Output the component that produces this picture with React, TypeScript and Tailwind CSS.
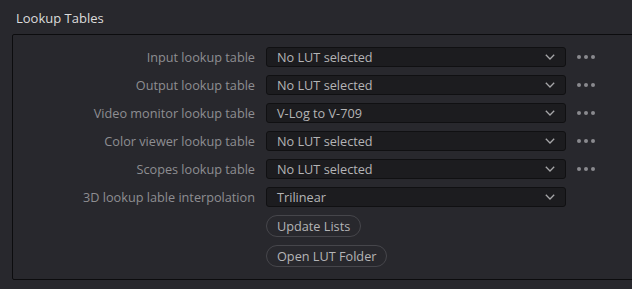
import React from "react";

const rows: { label: string; value: string; dots: boolean }[] = [
  { label: "Input lookup table", value: "No LUT selected", dots: true },
  { label: "Output lookup table", value: "No LUT selected", dots: true },
  { label: "Video monitor lookup table", value: "V-Log to V-709", dots: true },
  { label: "Color viewer lookup table", value: "No LUT selected", dots: true },
  { label: "Scopes lookup table", value: "No LUT selected", dots: true },
  { label: "3D lookup lable interpolation", value: "Trilinear", dots: false },
];

function Chevron() {
  return (
    <svg width="10" height="6" viewBox="0 0 10 6" fill="none">
      <path d="M0.8 0.8 L5 5 L9.2 0.8" stroke="#a6a6a8" strokeWidth="1.3" />
    </svg>
  );
}

function Dots() {
  return (
    <div className="flex items-center gap-[3px] w-[18px]">
      <span className="w-[4px] h-[4px] rounded-full bg-[#8a8a8e]" />
      <span className="w-[4px] h-[4px] rounded-full bg-[#8a8a8e]" />
      <span className="w-[4px] h-[4px] rounded-full bg-[#8a8a8e]" />
    </div>
  );
}

export default function App() {
  return (
    <div
      className="w-[632px] h-[289px] overflow-hidden bg-[#28282d] text-[12.7px]"
      style={{ fontFamily: '"Open Sans", "Noto Sans", sans-serif' }}
    >
      <div className="h-[34px] pl-[16px] pt-[6px] text-[13px] text-[#dcdcdc] leading-[24px]">Lookup Tables</div>
      <div className="ml-[12px] w-[640px] h-[246px] border border-[#0c0c0e] rounded-tl-[2px] rounded-bl-[2px] pt-[12px]">
        <div className="flex flex-col gap-[8px]">
          {rows.map((r) => (
            <div key={r.label} className="flex items-center h-[20px]">
              <div className="w-[242px] text-right text-[#8e8e92] leading-[20px] whitespace-nowrap">{r.label}</div>
              <div className="ml-[11px] w-[300px] h-[20px] bg-[#1c1c1f] border border-[#101012] rounded-[3px] flex items-center justify-between pl-[10px] pr-[10px]">
                <span className="text-[#b4b4b6] leading-[18px] whitespace-nowrap">{r.value}</span>
                <Chevron />
              </div>
              {r.dots && (
                <div className="ml-[11px]">
                  <Dots />
                </div>
              )}
            </div>
          ))}
          <div className="flex flex-col gap-[8px] pl-[253px]">
            <button className="self-start h-[22px] px-[10px] rounded-full border border-[#46464b] text-[#b4b4b6] leading-[20px]">
              Update Lists
            </button>
            <button className="self-start h-[22px] px-[10px] rounded-full border border-[#46464b] text-[#b4b4b6] leading-[20px]">
              Open LUT Folder
            </button>
          </div>
        </div>
      </div>
    </div>
  );
}
